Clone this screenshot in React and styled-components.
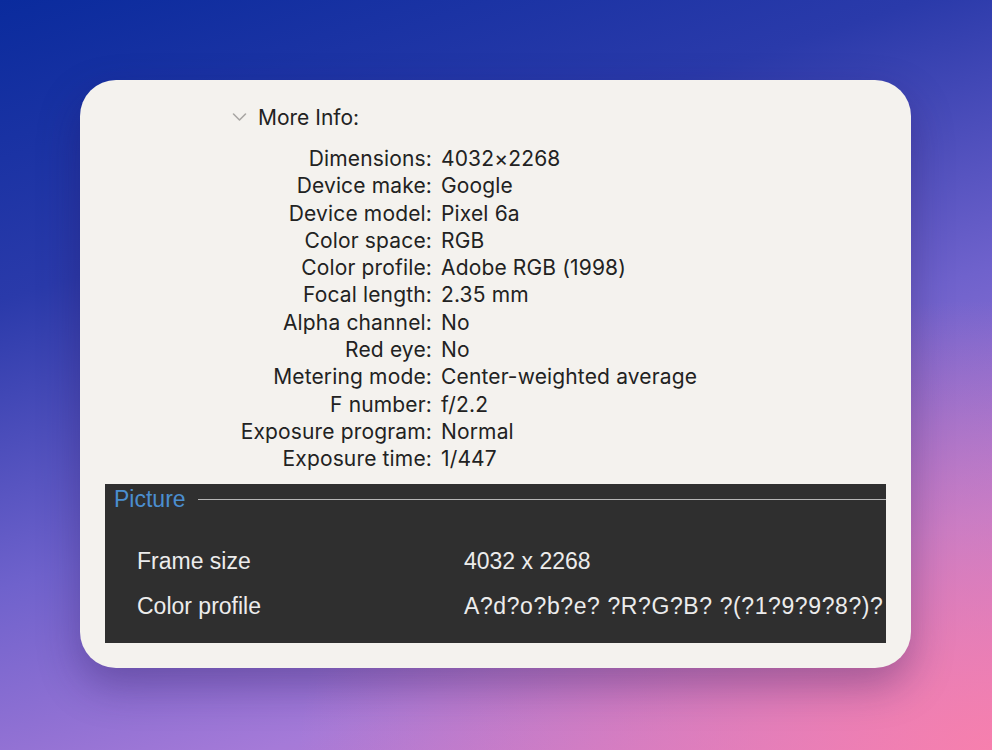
import React from 'react';
import styled, { createGlobalStyle } from 'styled-components';

const GlobalStyle = createGlobalStyle`
  html, body {
    margin: 0;
    padding: 0;
  }
  body {
    font-family: Inter, "Liberation Sans", sans-serif;
  }
`;

const Backdrop = styled.div`
  width: 992px;
  height: 750px;
  box-sizing: border-box;
  padding-top: 80px;
  padding-left: 80px;
  overflow: hidden;
  background:
    radial-gradient(ellipse 70% 60% at 100% 100%, rgba(250, 128, 170, 0.9) 0%, rgba(250, 128, 170, 0) 100%),
    linear-gradient(162deg, #0a2b9d 0%, #2a3aaa 28%, #6f62cc 55%, #a57ad8 78%, #d47ccc 100%);
`;

const Card = styled.div`
  width: 831px;
  height: 588px;
  box-sizing: border-box;
  background: #f4f2ee;
  border-radius: 36px;
  box-shadow: 0 18px 40px rgba(40, 20, 90, 0.35);
  display: flex;
  flex-direction: column;
  padding: 24px 25px 25px;
`;

const Disclosure = styled.div`
  display: flex;
  align-items: center;
  gap: 11px;
  margin-left: 127px;
  height: 26px;
  font-size: 21px;
  color: #222;
`;

const Chevron = styled.svg`
  width: 15px;
  height: 10px;
  margin-top: -1px;
`;

const InfoGrid = styled.div`
  display: grid;
  grid-template-columns: 327px auto;
  column-gap: 9px;
  margin-top: 15px;
  font-size: 21px;
  letter-spacing: 0.15px;
  color: #222;
  line-height: 27.3px;
`;

const Label = styled.div`
  text-align: right;
  white-space: nowrap;
`;

const Value = styled.div`
  white-space: nowrap;
`;

const Panel = styled.div`
  margin-top: auto;
  height: 159px;
  background: #2f2f2f;
  font-family: "Liberation Sans", Arial, sans-serif;
  display: flex;
  flex-direction: column;
`;

const Legend = styled.div`
  display: flex;
  align-items: center;
  gap: 12px;
  padding-left: 9px;
  height: 28px;
  margin-top: 1px;
`;

const LegendTitle = styled.span`
  color: #4b8ecf;
  font-size: 23px;
`;

const LegendRule = styled.div`
  flex: 1;
  height: 1px;
  background: #b5b5b5;
`;

const PanelRows = styled.div`
  display: grid;
  grid-template-columns: 327px auto;
  row-gap: 18px;
  padding-left: 32px;
  margin-top: 35px;
  color: #ececec;
  font-size: 23px;
  line-height: 27px;
`;

const PanelValue = styled.span`
  letter-spacing: ${(p) => (p.$garbled ? '0.6px' : '0')};
  white-space: nowrap;
`;

const info = [
  ['Dimensions:', '4032×2268'],
  ['Device make:', 'Google'],
  ['Device model:', 'Pixel 6a'],
  ['Color space:', 'RGB'],
  ['Color profile:', 'Adobe RGB (1998)'],
  ['Focal length:', '2.35 mm'],
  ['Alpha channel:', 'No'],
  ['Red eye:', 'No'],
  ['Metering mode:', 'Center-weighted average'],
  ['F number:', 'f/2.2'],
  ['Exposure program:', 'Normal'],
  ['Exposure time:', '1/447'],
];

const picture = [
  ['Frame size', '4032 x 2268', false],
  ['Color profile', 'A?d?o?b?e? ?R?G?B? ?(?1?9?9?8?)?', true],
];

export default function App() {
  return (
    <>
      <GlobalStyle />
      <Backdrop>
        <Card>
          <Disclosure>
            <Chevron viewBox="0 0 15 10">
              <path d="M1.5 2 L7.5 8 L13.5 2" fill="none" stroke="#a9a7a4" strokeWidth="1.6" strokeLinecap="round" strokeLinejoin="round" />
            </Chevron>
            More Info:
          </Disclosure>
          <InfoGrid>
            {info.map(([label, value]) => (
              <React.Fragment key={label}>
                <Label>{label}</Label>
                <Value>{value}</Value>
              </React.Fragment>
            ))}
          </InfoGrid>
          <Panel>
            <Legend>
              <LegendTitle>Picture</LegendTitle>
              <LegendRule />
            </Legend>
            <PanelRows>
              {picture.map(([label, value, garbled]) => (
                <React.Fragment key={label}>
                  <span>{label}</span>
                  <PanelValue $garbled={garbled}>{value}</PanelValue>
                </React.Fragment>
              ))}
            </PanelRows>
          </Panel>
        </Card>
      </Backdrop>
    </>
  );
}
